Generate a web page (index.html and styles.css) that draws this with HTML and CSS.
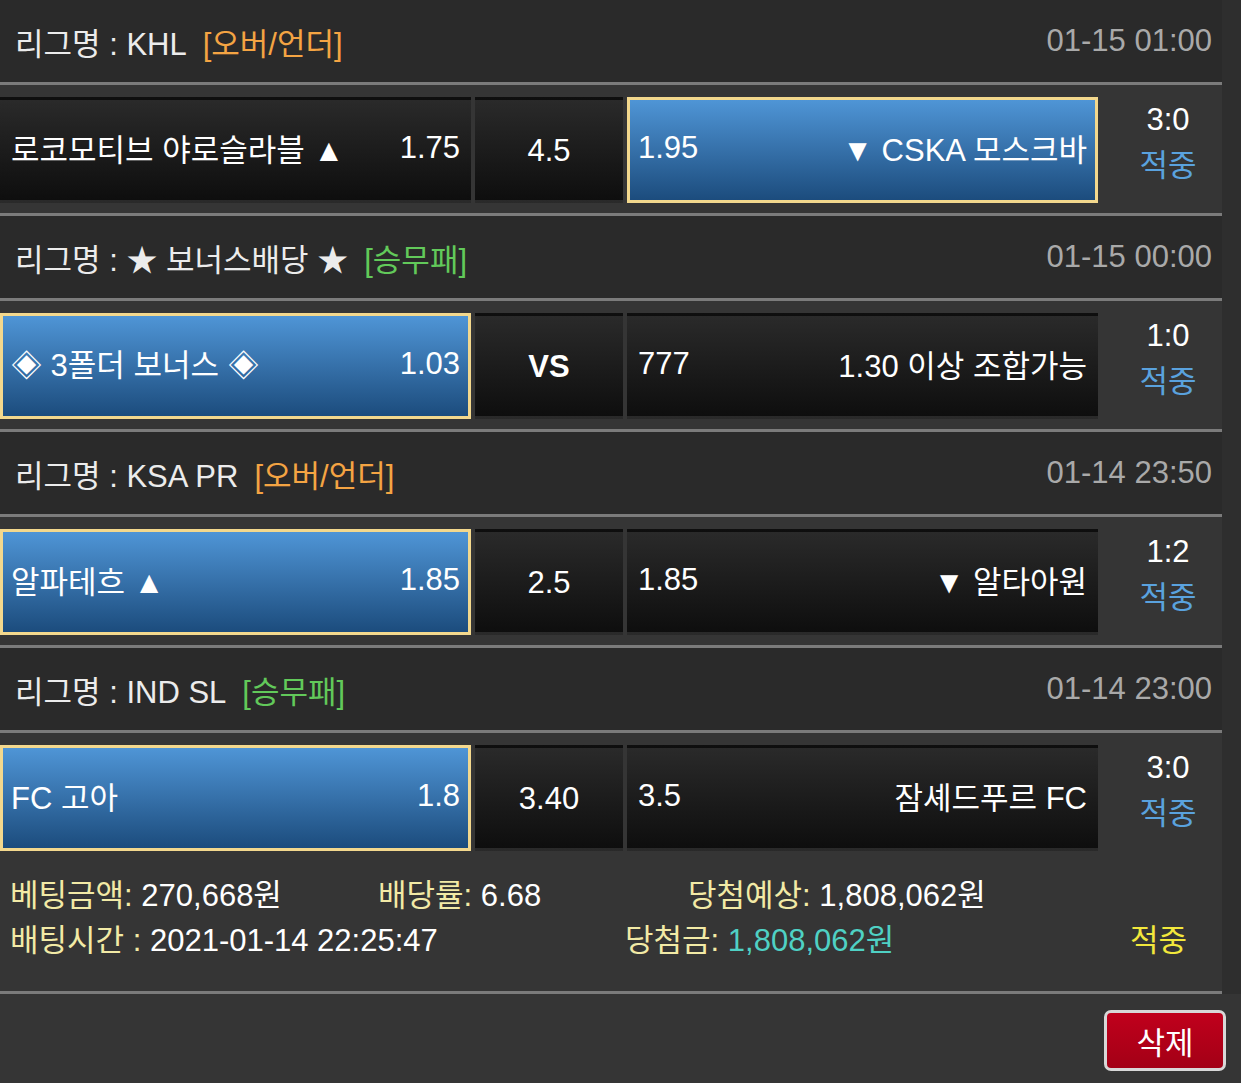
FILE: index.html
```html
<!DOCTYPE html>
<html lang="ko">
<head>
    <meta charset="UTF-8">
    <meta name="viewport" content="width=device-width, initial-scale=1.0">
    <title>배팅내역</title>
    <link rel="stylesheet" href="styles.css">
</head>
<body>

    <!-- Bet slip -->
    <div class="board">

        <!-- Game 1 -->
        <section class="game">
            <div class="league">
                <span>리그명 : KHL</span>
                <span class="tag tag-ou">[오버/언더]</span>
                <span class="time">01-15 01:00</span>
            </div>
            <div class="match">
                <div class="pick"><span>로코모티브 야로슬라블 ▲</span><span>1.75</span></div>
                <div class="pick pick-mid">4.5</div>
                <div class="pick selected"><span>1.95</span><span>▼ CSKA 모스크바</span></div>
                <div class="result"><span>3:0</span><span class="hit">적중</span></div>
            </div>
        </section>

        <!-- Game 2 -->
        <section class="game">
            <div class="league">
                <span>리그명 : ★ 보너스배당 ★</span>
                <span class="tag tag-wdl">[승무패]</span>
                <span class="time">01-15 00:00</span>
            </div>
            <div class="match">
                <div class="pick selected"><span>◈ 3폴더 보너스 ◈</span><span>1.03</span></div>
                <div class="pick pick-mid vs">VS</div>
                <div class="pick"><span>777</span><span>1.30 이상 조합가능</span></div>
                <div class="result"><span>1:0</span><span class="hit">적중</span></div>
            </div>
        </section>

        <!-- Game 3 -->
        <section class="game">
            <div class="league">
                <span>리그명 : KSA PR</span>
                <span class="tag tag-ou">[오버/언더]</span>
                <span class="time">01-14 23:50</span>
            </div>
            <div class="match">
                <div class="pick selected"><span>알파테흐 ▲</span><span>1.85</span></div>
                <div class="pick pick-mid">2.5</div>
                <div class="pick"><span>1.85</span><span>▼ 알타아원</span></div>
                <div class="result"><span>1:2</span><span class="hit">적중</span></div>
            </div>
        </section>

        <!-- Game 4 -->
        <section class="game">
            <div class="league">
                <span>리그명 : IND SL</span>
                <span class="tag tag-wdl">[승무패]</span>
                <span class="time">01-14 23:00</span>
            </div>
            <div class="match">
                <div class="pick selected"><span>FC 고아</span><span>1.8</span></div>
                <div class="pick pick-mid">3.40</div>
                <div class="pick"><span>3.5</span><span>잠셰드푸르 FC</span></div>
                <div class="result"><span>3:0</span><span class="hit">적중</span></div>
            </div>
        </section>

        <!-- Summary -->
        <div class="summary">
            <div class="sum-row sum-top">
                <span><em>베팅금액:</em> 270,668원</span>
                <span><em>배당률:</em> 6.68</span>
                <span><em>당첨예상:</em> 1,808,062원</span>
            </div>
            <div class="sum-row sum-bottom">
                <span><em>배팅시간 :</em> 2021-01-14 22:25:47</span>
                <span><em>당첨금:</em> <b class="win">1,808,062원</b></span>
                <span class="status">적중</span>
            </div>
        </div>
    </div>

    <div class="footer">
        <button class="del-btn">삭제</button>
    </div>

</body>
</html>
```

FILE: styles.css
```css
/* Colors */
:root {
    --page-bg: #2e2e2e;
    --row-bg: #353535;
    --head-bg: #2a2a2a;
    --line: #7b7b7b;
    --cream: #f2eaa6;
}

* {
    margin: 0;
    padding: 0;
    box-sizing: border-box;
    font-family: "Liberation Sans", "Noto Sans CJK KR", sans-serif;
}

body {
    background: var(--page-bg);
    color: #fff;
    font-size: 31px;
    overflow: hidden;
}

.board {
    width: 1222px;
    background: var(--row-bg);
}

/* League header */
.league {
    display: flex;
    align-items: center;
    height: 85px;
    padding: 0 10px 0 15px;
    background: var(--head-bg);
    border-bottom: 3px solid var(--line);
    color: #ececec;
}

.tag {
    margin-left: 16px;
}

.tag-ou {
    color: #f4a443;
}

.tag-wdl {
    color: #62c95a;
}

.time {
    margin-left: auto;
    color: #a9a9a9;
}

/* Match row */
.match {
    display: grid;
    grid-template-columns: 471px 148px 471px 1fr;
    column-gap: 4px;
    height: 131px;
    padding: 12px 0 10px;
    border-bottom: 3px solid var(--line);
}

.game:last-of-type .match {
    height: 128px;
    border-bottom: none;
}

.pick {
    display: flex;
    justify-content: space-between;
    align-items: center;
    padding: 0 8px 5px;
    border: 3px solid transparent;
    background: linear-gradient(#2a2a2a, #0e0e0e);
    white-space: nowrap;
}

.pick-mid {
    justify-content: center;
    padding: 2px 0 0;
}

.vs {
    font-weight: bold;
}

.pick.selected {
    border-color: #f3d88d;
    background: linear-gradient(#4f95d6, #1c4c7d);
}

.result {
    display: flex;
    flex-direction: column;
    align-items: center;
    justify-content: center;
    padding-left: 12px;
    margin-top: -14px;
    line-height: 46px;
}

.hit {
    color: #5aa2de;
}

/* Summary */
.summary {
    padding: 12px 10px 28px;
    border-bottom: 3px solid var(--line);
    line-height: 45px;
}

.sum-row {
    display: grid;
}

.sum-top {
    grid-template-columns: 368px 310px auto;
}

.sum-bottom {
    grid-template-columns: 615px 505px auto;
}

.summary em {
    font-style: normal;
    color: var(--cream);
}

.win {
    font-weight: normal;
    color: #4fd1c4;
}

.status {
    color: #f2e83c;
}

/* Footer */
.footer {
    display: flex;
    justify-content: flex-end;
    height: 89px;
    padding: 16px 15px 0 0;
    background: var(--row-bg);
}

.del-btn {
    width: 122px;
    height: 61px;
    border: 3px solid #d8d8d8;
    border-radius: 7px;
    background: linear-gradient(#c0001c, #a30016);
    color: #fff;
    font-size: 31px;
}
```
